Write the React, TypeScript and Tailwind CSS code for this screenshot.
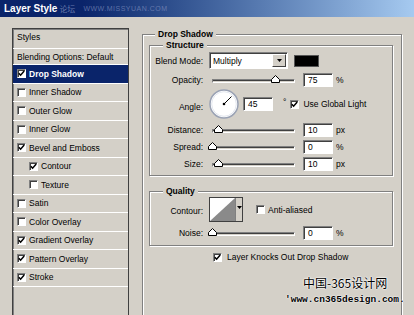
import React from "react";

const sunken =
  "border border-t-[#808080] border-l-[#808080] border-r-white border-b-white shadow-[inset_1px_1px_0_#404040]";

function Check({ checked }: { checked: boolean }) {
  return (
    <div className={`w-[9px] h-[9px] shrink-0 bg-white flex items-center justify-center ${sunken}`}>
      {checked && (
        <svg width="7" height="7" viewBox="0 0 7 7">
          <path d="M0.8 3.2 L2.6 5.2 L6.2 1" fill="none" stroke="#000" strokeWidth="1.5" />
        </svg>
      )}
    </div>
  );
}

function Thumb() {
  return (
    <svg width="9" height="8" viewBox="0 0 9 8">
      <polygon points="0.5,7.5 0.5,4.5 4.5,0.5 8.5,4.5 8.5,7.5" fill="#fff" stroke="#000" strokeWidth="1" />
    </svg>
  );
}

function Slider({ left }: { left: string }) {
  return (
    <div className="relative ml-[5px] w-[87px] h-[14px] shrink-0">
      <div className="absolute left-[4px] right-0 top-[6px] h-[4px] bg-[#d4d0c8] border border-t-[#808080] border-l-[#808080] border-r-white border-b-white shadow-[inset_0_1px_0_#404040]" />
      <div className={`absolute top-[2px] ${left} leading-none flex`}>
        <Thumb />
      </div>
    </div>
  );
}

function Field({ value, w = "w-[30px]", ml = "ml-[8px]" }: { value: string; w?: string; ml?: string }) {
  return (
    <div className={`${ml} ${w} h-[14px] shrink-0 bg-white flex items-center pl-[4px] ${sunken}`}>{value}</div>
  );
}

function Label({ text, extra = "" }: { text: string; extra?: string }) {
  return <div className={`w-[53px] shrink-0 text-right ${extra}`}>{text}</div>;
}

function SliderRow({
  label,
  value,
  unit,
  left,
  mt,
}: {
  label: string;
  value: string;
  unit: string;
  left: string;
  mt: string;
}) {
  return (
    <div className={`flex items-center h-[14px] ${mt}`}>
      <Label text={label} />
      <Slider left={left} />
      <Field value={value} />
      <div className="ml-[3px]">{unit}</div>
    </div>
  );
}

function Group({
  title,
  titleLeft,
  className,
  children,
}: {
  title: string;
  titleLeft: string;
  className: string;
  children: React.ReactNode;
}) {
  return (
    <div
      className={`relative border border-[#808080] shadow-[inset_1px_1px_0_#fff,1px_1px_0_#fff] ${className}`}
    >
      <div className={`absolute -top-[6px] ${titleLeft} px-[3px] bg-[#d4d0c8] font-bold leading-[10px]`}>
        {title}
      </div>
      {children}
    </div>
  );
}

const items: { label: string; checked: boolean; selected?: boolean; indent?: boolean }[] = [
  { label: "Drop Shadow", checked: true, selected: true },
  { label: "Inner Shadow", checked: false },
  { label: "Outer Glow", checked: false },
  { label: "Inner Glow", checked: false },
  { label: "Bevel and Emboss", checked: true },
  { label: "Contour", checked: true, indent: true },
  { label: "Texture", checked: false, indent: true },
  { label: "Satin", checked: false },
  { label: "Color Overlay", checked: false },
  { label: "Gradient Overlay", checked: true },
  { label: "Pattern Overlay", checked: true },
  { label: "Stroke", checked: true },
];

export default function App() {
  return (
    <div className="relative w-[414px] h-[315px] overflow-hidden bg-[#d4d0c8] text-black text-[8.5px] leading-[10px] font-['Liberation_Sans',Arial,sans-serif]">
      {/* Title bar */}
      <div className="h-[17px] flex items-center pl-[4px] bg-linear-to-r from-[#0a246a] from-20% to-[#a6caf0]">
        <span className="text-white font-bold text-[10px] leading-[12px]">Layer Style</span>
        <span className="ml-[2px] text-[#7d8cbc] text-[8px] font-['Noto_Sans_CJK_SC',sans-serif] opacity-80">论坛</span>
        <span className="ml-[8px] text-[#8c9ac6] text-[7px] tracking-[0.5px] opacity-60">WWW.MISSYUAN.COM</span>
      </div>

      {/* Body */}
      <div className="flex pt-[11px] pl-[12px]">
        {/* Left list */}
        <div className="w-[117px] h-[300px] shrink-0 border border-[#404040] shadow-[inset_1px_1px_0_#808080]">
          <div className="h-[20px] pb-[4px] border-b border-white flex items-center pl-[4px]">Styles</div>
          <div className="h-[16px] border-b border-white flex items-center pl-[4px]">Blending Options: Default</div>
          {items.map((it) => (
            <div
              key={it.label}
              className={`h-[18.5px] border-b border-white flex items-center ${it.indent ? "pl-[16px]" : "pl-[4px]"} ${
                it.selected ? "bg-[#0a246a] text-white font-bold" : ""
              }`}
            >
              <Check checked={it.checked} />
              <span className="ml-[3px]">{it.label}</span>
            </div>
          ))}
        </div>

        {/* Right */}
        <Group title="Drop Shadow" titleLeft="left-[12px]" className="ml-[13px] mt-[6px] w-[260px] h-[300px] pt-[10px] pl-[6px]">
          <Group title="Structure" titleLeft="left-[13px]" className="w-[244px] h-[131px]">
            {/* Blend mode */}
            <div className="flex items-center h-[17px] mt-[6px]">
              <Label text="Blend Mode:" />
              <div className={`ml-[6px] w-[79px] h-[17px] bg-white flex items-center justify-between pl-[3px] pr-[1px] ${sunken}`}>
                <span>Multiply</span>
                <div className="w-[14px] h-[13px] bg-[#d4d0c8] border border-t-white border-l-white border-r-[#404040] border-b-[#404040] flex items-center justify-center">
                  <svg width="5" height="3" viewBox="0 0 5 3">
                    <polygon points="0,0 5,0 2.5,3" fill="#000" />
                  </svg>
                </div>
              </div>
              <div className="ml-[6px] w-[25px] h-[12px] bg-black border border-[#555]" />
            </div>

            <SliderRow label="Opacity:" value="75" unit="%" left="left-[63px]" mt="mt-[4px]" />

            {/* Angle */}
            <div className="flex items-center h-[30px] mt-[2px]">
              <Label text="Angle:" extra="mt-[5px]" />
              <div className="ml-[6px] w-[30px] h-[30px] shrink-0">
                <svg width="30" height="30" viewBox="0 0 30 30">
                  <circle cx="15" cy="15" r="14" fill="#fff" stroke="#9aa2b4" strokeWidth="1.5" />
                  <circle cx="15" cy="15" r="12.3" fill="none" stroke="#e2e6ee" strokeWidth="1" />
                  <line x1="15" y1="15" x2="22.5" y2="7.5" stroke="#000" strokeWidth="1" />
                  <circle cx="15" cy="15" r="1.3" fill="#000" />
                </svg>
              </div>
              <Field value="45" ml="ml-[4px]" />
              <div className="ml-[10px] self-start mt-[9px] leading-[8px]">°</div>
              <div className="ml-[4px]">
                <Check checked={true} />
              </div>
              <span className="ml-[4px]">Use Global Light</span>
            </div>

            <SliderRow label="Distance:" value="10" unit="px" left="left-[6px]" mt="mt-[4px]" />
            <SliderRow label="Spread:" value="0" unit="%" left="left-[0px]" mt="mt-[3px]" />
            <SliderRow label="Size:" value="10" unit="px" left="left-[6px]" mt="mt-[3px]" />
          </Group>

          <Group title="Quality" titleLeft="left-[13px]" className="mt-[15px] w-[244px] h-[55px]">
            <div className="flex items-center h-[25px] mt-[5px]">
              <Label text="Contour:" extra="mt-[2px]" />
              <div className="ml-[6px] w-[34px] h-[25px] shrink-0 flex border border-[#404040]">
                <svg width="25" height="23" viewBox="0 0 25 23" className="shrink-0">
                  <rect x="0" y="0" width="25" height="23" fill="#fff" />
                  <polygon points="0,23 25,0 25,23" fill="#8a8a8a" />
                </svg>
                <div className="flex-1 bg-[#d4d0c8] border-l border-[#808080] flex justify-center pt-[8px]">
                  <svg width="5" height="3" viewBox="0 0 5 3">
                    <polygon points="0,0 5,0 2.5,3" fill="#000" />
                  </svg>
                </div>
              </div>
              <div className="ml-[13px]">
                <Check checked={false} />
              </div>
              <span className="ml-[3px]">Anti-aliased</span>
            </div>
            <SliderRow label="Noise:" value="0" unit="%" left="left-[0px]" mt="mt-[4px]" />
          </Group>

          <div className="flex items-center h-[10px] mt-[6px] ml-[64px]">
            <Check checked={true} />
            <span className="ml-[5px]">Layer Knocks Out Drop Shadow</span>
          </div>
        </Group>
      </div>

      {/* Watermark overlay */}
      <div className="absolute left-[303px] top-[275px] text-[12px] leading-[15px] font-['Noto_Sans_CJK_SC',sans-serif] [text-shadow:0_0_2px_#fff,0_0_2px_#fff,0_0_1px_#fff]">
        中国-365设计网
      </div>
      <div className="absolute left-[285px] top-[294px] text-[9.5px] leading-[12px] font-bold font-['Liberation_Mono',monospace] [text-shadow:0_0_2px_#fff,0_0_1px_#fff]">
        'www.cn365design.com.
      </div>
    </div>
  );
}
